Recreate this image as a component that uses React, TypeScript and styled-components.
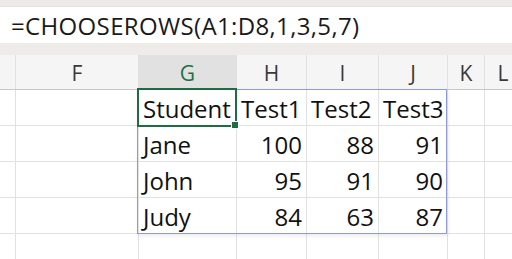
import styled, { createGlobalStyle } from 'styled-components';

const GlobalStyle = createGlobalStyle`
  html, body {
    margin: 0;
    padding: 0;
    background: #ffffff;
    overflow: hidden;
  }
`;

const columns = [
  { name: 'E', width: 16, label: '' },
  { name: 'F', width: 123, label: 'F' },
  { name: 'G', width: 98, label: 'G' },
  { name: 'H', width: 70, label: 'H' },
  { name: 'I', width: 72, label: 'I' },
  { name: 'J', width: 69, label: 'J' },
  { name: 'K', width: 37, label: 'K' },
  { name: 'L', width: 37, label: 'L' },
  { name: 'M', width: 60, label: '' },
];

const rows = [
  ['Student', 'Test1', 'Test2', 'Test3'],
  ['Jane', 100, 88, 91],
  ['John', 95, 91, 90],
  ['Judy', 84, 63, 87],
  [],
];

const template = columns.map((c) => `${c.width}px`).join(' ');

const App = () => {
  return (
    <>
      <GlobalStyle />
      <Window>
        <TopStrip />
        <FormulaBar>
          <Formula>=CHOOSEROWS(A1:D8,1,3,5,7)</Formula>
        </FormulaBar>
        <Divider />
        <Sheet>
          <HeaderRow>
            {columns.map((c) => (
              <ColumnHeader key={c.name} $active={c.name === 'G'}>
                {c.label}
              </ColumnHeader>
            ))}
          </HeaderRow>
          {rows.map((row, r) => (
            <Row key={r}>
              {columns.map((c, i) => {
                const value = i >= 2 && i <= 5 ? row[i - 2] : undefined;
                return (
                  <Cell key={c.name} $numeric={typeof value === 'number'}>
                    {value}
                  </Cell>
                );
              })}
            </Row>
          ))}
          <SpillRange />
          <Selection>
            <FillHandle />
          </Selection>
        </Sheet>
      </Window>
    </>
  );
};

const Window = styled.div`
  width: 512px;
  height: 259px;
  overflow: hidden;
  display: flex;
  flex-direction: column;
  background: #ffffff;
`;

const TopStrip = styled.div`
  flex-shrink: 0;
  height: 6px;
  background: #eeeae8;
  border-bottom: 1px solid #e4e0de;
`;

const FormulaBar = styled.div`
  flex-shrink: 0;
  height: 36px;
  display: flex;
  align-items: center;
  padding-left: 11px;
  background: #ffffff;
`;

const Formula = styled.span`
  font-family: 'Open Sans', 'Noto Sans', sans-serif;
  font-size: 24px;
  color: #1a1a1a;
  letter-spacing: 0.35px;
`;

const Divider = styled.div`
  flex-shrink: 0;
  height: 12px;
  background: #efebe9;
`;

const Sheet = styled.div`
  position: relative;
  flex-shrink: 0;
`;

const HeaderRow = styled.div`
  display: grid;
  grid-template-columns: ${template};
  height: 34px;
  background: #f5f5f5;
  border-bottom: 1px solid #c8c8c8;
`;

const ColumnHeader = styled.div<{ $active?: boolean }>`
  display: flex;
  align-items: center;
  justify-content: center;
  box-sizing: border-box;
  border-right: 1px solid #e0e0e0;
  background: ${(p) => (p.$active ? '#e1e1e1' : 'transparent')};
  color: ${(p) => (p.$active ? '#1e7145' : '#3a3a3a')};
  font-family: 'Open Sans', 'Noto Sans', sans-serif;
  font-size: 21px;
  padding-top: 2px;
`;

const Row = styled.div`
  display: grid;
  grid-template-columns: ${template};
  height: 36px;
`;

const Cell = styled.div<{ $numeric?: boolean }>`
  display: flex;
  align-items: flex-end;
  justify-content: ${(p) => (p.$numeric ? 'flex-end' : 'flex-start')};
  box-sizing: border-box;
  border-right: 1px solid #e1e1e1;
  border-bottom: 1px solid #e1e1e1;
  padding: 0 4px 0 4px;
  font-family: 'Open Sans', 'Noto Sans', sans-serif;
  font-size: 24px;
  line-height: 32px;
  color: #111111;
  white-space: nowrap;
`;

const SpillRange = styled.div`
  position: absolute;
  left: 137px;
  top: 34px;
  width: 310px;
  height: 145px;
  box-sizing: border-box;
  border: 1px solid #8e9bd6;
  box-shadow: 1px 2px 4px rgba(0, 0, 0, 0.08);
  pointer-events: none;
`;

const Selection = styled.div`
  position: absolute;
  left: 137px;
  top: 33px;
  width: 100px;
  height: 39px;
  box-sizing: border-box;
  border: 2px solid #1e6c41;
  pointer-events: none;
`;

const FillHandle = styled.div`
  position: absolute;
  right: -4px;
  bottom: -4px;
  width: 6px;
  height: 6px;
  background: #1e6c41;
  border: 1px solid #ffffff;
`;

export default App;
